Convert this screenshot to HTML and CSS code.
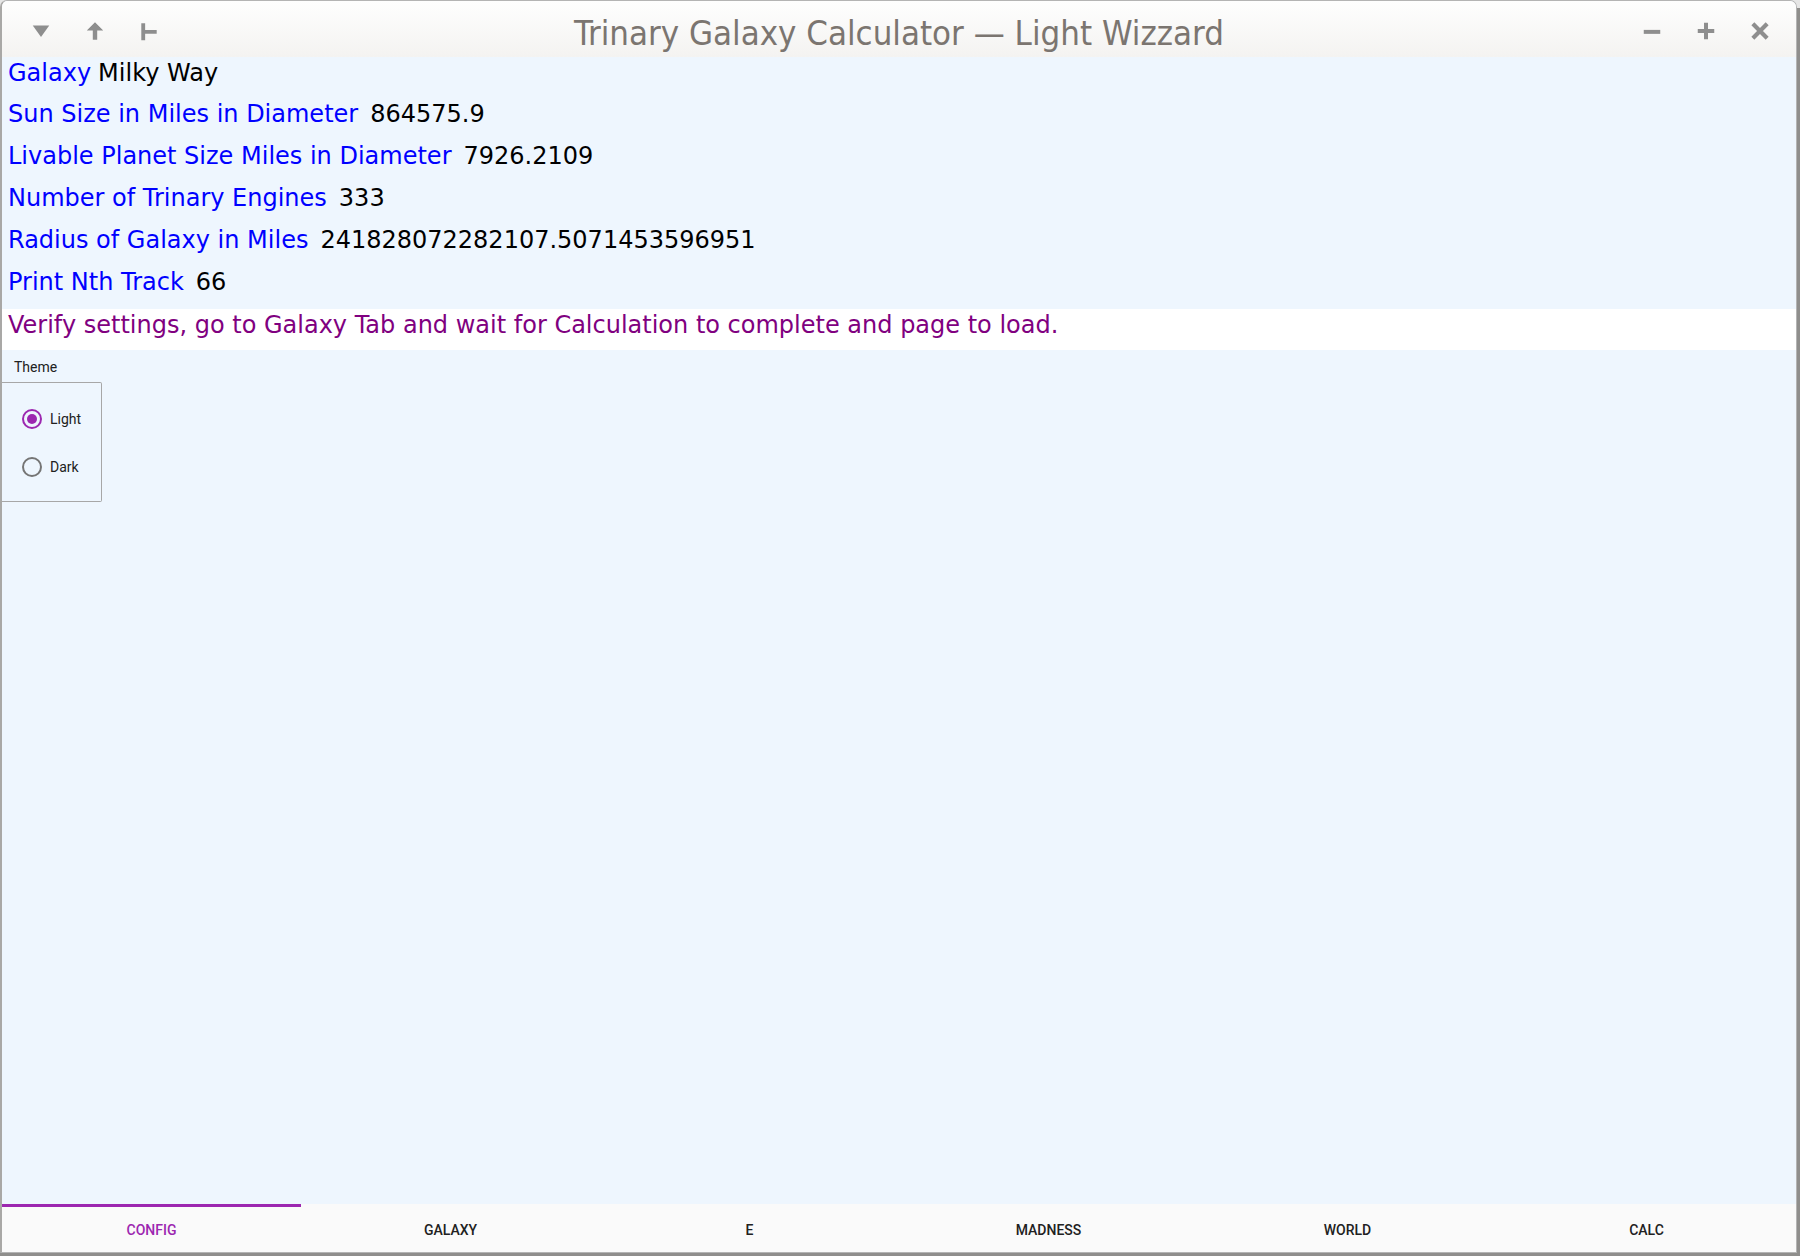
FILE: index.html
```html
<!DOCTYPE html>
<html>
<head>
<meta charset="utf-8">
<link rel="stylesheet" href="styles.css">
</head>
<body>
<div class="window">
  <div class="titlebar">
    <div class="tb-left">
      <svg class="tb-icon" viewBox="0 0 20 20"><path d="M2.5 5 L17.5 5 L10 15.5 Z" fill="#8e8e8e"/></svg>
      <svg class="tb-icon" viewBox="0 0 20 20"><path d="M10 2 L17.5 9.5 L12 9.5 L12 18 L8 18 L8 9.5 L2.5 9.5 Z" fill="#8e8e8e"/></svg>
      <svg class="tb-icon" viewBox="0 0 20 20"><path d="M3 3 L6.5 3 L6.5 9 L17 9 L17 12.5 L6.5 12.5 L6.5 18.5 L3 18.5 Z" fill="#8e8e8e"/></svg>
    </div>
    <div class="title">Trinary Galaxy Calculator — Light Wizzard</div>
    <div class="tb-right">
      <svg class="tb-icon" viewBox="0 0 20 20"><rect x="2.5" y="9" width="15" height="3.6" fill="#8e8e8e"/></svg>
      <svg class="tb-icon" viewBox="0 0 20 20"><path d="M8.2 2.5 H11.8 V8.2 H17.5 V11.8 H11.8 V17.5 H8.2 V11.8 H2.5 V8.2 H8.2 Z" fill="#8e8e8e"/></svg>
      <svg class="tb-icon" viewBox="0 0 20 20"><path d="M3.5 3.5 L16.5 16.5 M16.5 3.5 L3.5 16.5" stroke="#8e8e8e" stroke-width="3.8"/></svg>
    </div>
  </div>
  <div class="content">
    <div class="row first"><span class="lbl">Galaxy</span><span class="val tight">Milky Way</span></div>
    <div class="row"><span class="lbl">Sun Size in Miles in Diameter</span><span class="val">864575.9</span></div>
    <div class="row"><span class="lbl">Livable Planet Size Miles in Diameter</span><span class="val">7926.2109</span></div>
    <div class="row"><span class="lbl">Number of Trinary Engines</span><span class="val">333</span></div>
    <div class="row"><span class="lbl">Radius of Galaxy in Miles</span><span class="val">241828072282107.5071453596951</span></div>
    <div class="row last"><span class="lbl">Print Nth Track</span><span class="val">66</span></div>
    <div class="notice">Verify settings, go to Galaxy Tab and wait for Calculation to complete and page to load.</div>
    <div class="theme">
      <div class="theme-label">Theme</div>
      <div class="groupbox">
        <div class="radio"><span class="circle checked"></span><span>Light</span></div>
        <div class="radio"><span class="circle"></span><span>Dark</span></div>
      </div>
    </div>
  </div>
  <div class="tabs">
    <div class="tab active">CONFIG</div>
    <div class="tab">GALAXY</div>
    <div class="tab">E</div>
    <div class="tab">MADNESS</div>
    <div class="tab">WORLD</div>
    <div class="tab">CALC</div>
  </div>
</div>
</body>
</html>
```

FILE: styles.css
```css
html, body {
  margin: 0;
  padding: 0;
}
body {
  width: 1800px;
  height: 1256px;
  overflow: hidden;
  background: linear-gradient(#e6e6e6, #e6e6e6) top/100% 8px no-repeat, #8f8e8c;
}
.window {
  box-sizing: border-box;
  width: 1797px;
  height: 1253px;
  border: 1px solid #b4b4b4;
  border-left: 2px solid #a9a8a6;
  border-radius: 7px 7px 0 0;
  display: flex;
  flex-direction: column;
  background: #eef6fe;
  overflow: hidden;
}
.titlebar {
  flex: 0 0 56px;
  background: linear-gradient(#fefefe, #f4f3f1);
  display: flex;
  align-items: center;
  position: relative;
  padding-top: 4px;
  box-sizing: border-box;
}
.tb-left, .tb-right {
  display: flex;
  align-items: center;
  gap: 32px;
}
.tb-left { padding-left: 28px; }
.tb-right { margin-left: auto; padding-right: 25px; }
.tb-icon {
  width: 22px;
  height: 22px;
  display: block;
}
.title {
  position: absolute;
  left: 0;
  right: 0;
  top: 0;
  bottom: 0;
  display: flex;
  align-items: center;
  justify-content: center;
  padding-top: 8px;
  font-family: "DejaVu Sans Condensed", "DejaVu Sans", sans-serif;
  font-weight: 300;
  font-size: 34.5px;
  color: #7b7570;
  pointer-events: none;
}
.content {
  flex: 1;
  display: flex;
  flex-direction: column;
  font-family: "DejaVu Sans", sans-serif;
  font-size: 24px;
}
.row {
  height: 42px;
  display: flex;
  align-items: center;
  padding-left: 6px;
  white-space: nowrap;
}
.row.first {
  height: 36px;
  padding-bottom: 4px;
  box-sizing: border-box;
}
.row.last { height: 48px; padding-bottom: 6px; box-sizing: border-box; }
.lbl { color: #0000ff; }
.val { color: #000; margin-left: 12px; }
.val.tight { margin-left: 7px; }
.notice {
  background: #ffffff;
  color: #800080;
  height: 41px;
  line-height: 32px;
  padding-left: 6px;
  white-space: nowrap;
}
.theme {
  font-family: Roboto, "Noto Sans", sans-serif;
  font-size: 14px;
  color: #212121;
}
.theme-label {
  padding: 9px 0 0 12px;
  height: 23px;
}
.groupbox {
  width: 100px;
  height: 120px;
  box-sizing: border-box;
  border: 1px solid #a7a7a7;
  border-left: none;
  border-radius: 0 2px 2px 0;
  padding: 25px 0 0 20px;
  display: flex;
  flex-direction: column;
  gap: 26px;
}
.radio {
  display: flex;
  align-items: center;
  gap: 8px;
  height: 22px;
}
.circle {
  box-sizing: border-box;
  width: 20px;
  height: 20px;
  border-radius: 50%;
  border: 2px solid #757575;
  position: relative;
}
.circle.checked { border-color: #9c27b0; }
.circle.checked::after {
  content: "";
  position: absolute;
  left: 3px;
  top: 3px;
  width: 10px;
  height: 10px;
  border-radius: 50%;
  background: #9c27b0;
}
.tabs {
  flex: 0 0 48px;
  display: flex;
  background: #fafafa;
  font-family: Roboto, "Noto Sans", sans-serif;
  font-weight: 500;
  font-size: 14px;
  color: #212121;
}
.tab {
  flex: 1;
  display: flex;
  align-items: center;
  justify-content: center;
  border-top: 3px solid transparent;
}
.tab.active {
  color: #9c27b0;
  border-top-color: #9c27b0;
}
```
